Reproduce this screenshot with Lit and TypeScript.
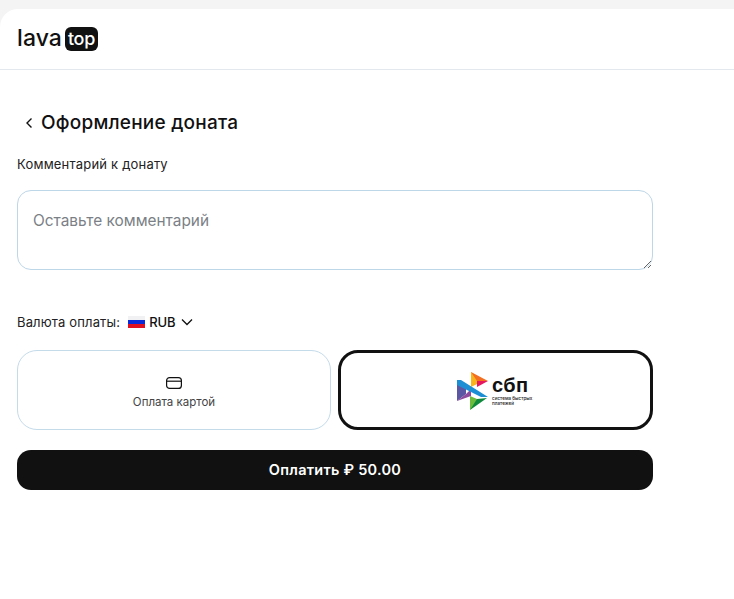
import { LitElement, html, css } from "lit";
import { customElement } from "lit/decorators.js";

@customElement("app-root")
export class AppRoot extends LitElement {
  static styles = css`
    :host {
      display: block;
      min-height: 599px;
      background: #f4f4f4;
      padding-top: 9px;
      box-sizing: border-box;
      font-family: Inter, "Liberation Sans", sans-serif;
      color: #111;
    }
    .panel {
      background: #fff;
      border-top-left-radius: 18px;
      min-height: 590px;
    }
    .header {
      height: 61px;
      box-sizing: border-box;
      border-bottom: 1px solid #e3e8ef;
      padding: 18px 0 0 17px;
      display: flex;
      align-items: flex-start;
      gap: 3px;
    }
    .lava {
      width: 45px;
      font: 500 23px/22px Inter, sans-serif;
      letter-spacing: 0.1px;
      color: #111;
    }
    .top {
      background: #111;
      color: #fff;
      border-radius: 6px;
      width: 33px;
      height: 24px;
      flex: none;
      display: flex;
      align-items: center;
      justify-content: center;
      font: 500 18px/24px Inter, sans-serif;
      letter-spacing: -0.3px;
    }
    .content {
      width: 636px;
      margin-left: 17px;
      padding-top: 40px;
    }
    .title {
      display: flex;
      align-items: center;
      height: 26px;
      gap: 8px;
      padding-left: 8px;
      margin: 0;
      font: 500 19px/26px Inter, sans-serif;
      letter-spacing: 0.22px;
      color: #111;
    }
    .title svg { display: block; }
    .label {
      margin-top: 19px;
      font-size: 13px;
      line-height: 18px;
      letter-spacing: 0.2px;
      color: #222;
    }
    textarea {
      display: block;
      box-sizing: border-box;
      width: 636px;
      height: 80px;
      margin-top: 17px;
      padding: 19px 15px;
      border: 1px solid #bdd6e8;
      border-radius: 14px;
      font: 400 15.4px/22px Inter, sans-serif;
      background: #fff;
      outline: none;
    }
    textarea::placeholder { color: #7b7f86; opacity: 1; }
    .currency {
      margin-top: 43px;
      height: 18px;
      display: flex;
      align-items: center;
      font-size: 13px;
      letter-spacing: 0.15px;
      color: #222;
    }
    .flag { margin-left: 8px; display: block; }
    .code { margin-left: 4px; font-weight: 500; color: #111; letter-spacing: -0.1px; }
    .chev { margin-left: 6px; display: block; }
    .methods {
      margin-top: 19px;
      display: grid;
      grid-template-columns: 314px 315px;
      gap: 7px;
    }
    .method {
      height: 80px;
      box-sizing: border-box;
      border-radius: 20px;
      background: #fff;
      display: flex;
      flex-direction: column;
      align-items: center;
      justify-content: center;
    }
    .card { border: 1px solid #c4dbea; gap: 5px; padding-top: 5px; font-size: 11.5px; color: #444; line-height: 14px; }
    .sbp { border: 3px solid #111; flex-direction: row; gap: 4px; padding-top: 2px; }
    .sbp-text { display: flex; flex-direction: column; width: 42px; padding-top: 1px; }
    .sbp-big { font: 700 20px/15px "Liberation Sans", sans-serif; color: #111; letter-spacing: 0.4px; }
    .sbp-small { font: 500 4.6px/5px Inter, sans-serif; color: #222; margin-top: 3px; }
    .pay {
      margin-top: 20px;
      width: 636px;
      height: 40px;
      border: 0;
      border-radius: 14px;
      background: #111;
      color: #fff;
      font: 600 14.5px/40px Inter, sans-serif;
      letter-spacing: 0.25px;
      padding: 0;
      display: block;
    }
  `;

  render() {
    return html`
      <div class="panel">
        <div class="header">
          <span class="lava">lava</span>
          <span class="top">top</span>
        </div>
        <div class="content">
          <h1 class="title">
            <svg width="8" height="12" viewBox="0 0 8 12" fill="none" stroke="#111" stroke-width="1.4"><path d="M6.5 1.5 2 6l4.5 4.5" /></svg>
            Оформление доната
          </h1>
          <div class="label">Комментарий к донату</div>
          <textarea placeholder="Оставьте комментарий"></textarea>
          <div class="currency">
            Валюта оплаты:
            <svg class="flag" width="17" height="12" viewBox="0 0 17 12"><rect width="17" height="4" fill="#f1f1f4"/><rect y="4" width="17" height="4" fill="#0a2bd8"/><rect y="8" width="17" height="4" fill="#e01020"/></svg>
            <span class="code">RUB</span>
            <svg class="chev" width="12" height="8" viewBox="0 0 12 8" fill="none" stroke="#111" stroke-width="1.3"><path d="M1 1.5l5 5 5-5"/></svg>
          </div>
          <div class="methods">
            <div class="method card">
              <svg width="18" height="14" viewBox="0 0 18 14" fill="none" stroke="#111" stroke-width="1.2"><rect x="1.6" y="1.6" width="14.8" height="10.8" rx="3"/><path d="M1.6 5.2h14.8"/></svg>
              <span>Оплата картой</span>
            </div>
            <div class="method sbp">
              <svg width="31" height="38" viewBox="0 0 31 38">
                <polygon points="0,9 0,29 9,22 9,14" fill="#5b57a2"/>
                <polygon points="0,29 9,22 14,17 14,24" fill="#8e4b9e"/>
                <polygon points="14,0 14,15 20,12 20,4" fill="#f9b31b"/>
                <polygon points="14,0 31,9 20,9" fill="#f36e21"/>
                <polygon points="20,15 31,9 20,9" fill="#e6175f"/>
                <polygon points="13,24 13,38 20,31 20,27" fill="#6cbb3c"/>
                <polygon points="13,38 30,26 20,27" fill="#0f8a3c"/>
                <polygon points="0,8 4,8 31,25 24,25 0,13" fill="#1c8fd4"/>
              </svg>
              <div class="sbp-text">
                <span class="sbp-big">сбп</span>
                <span class="sbp-small">система быстрых платежей</span>
              </div>
            </div>
          </div>
          <button class="pay">Оплатить ₽ 50.00</button>
        </div>
      </div>
    `;
  }
}
